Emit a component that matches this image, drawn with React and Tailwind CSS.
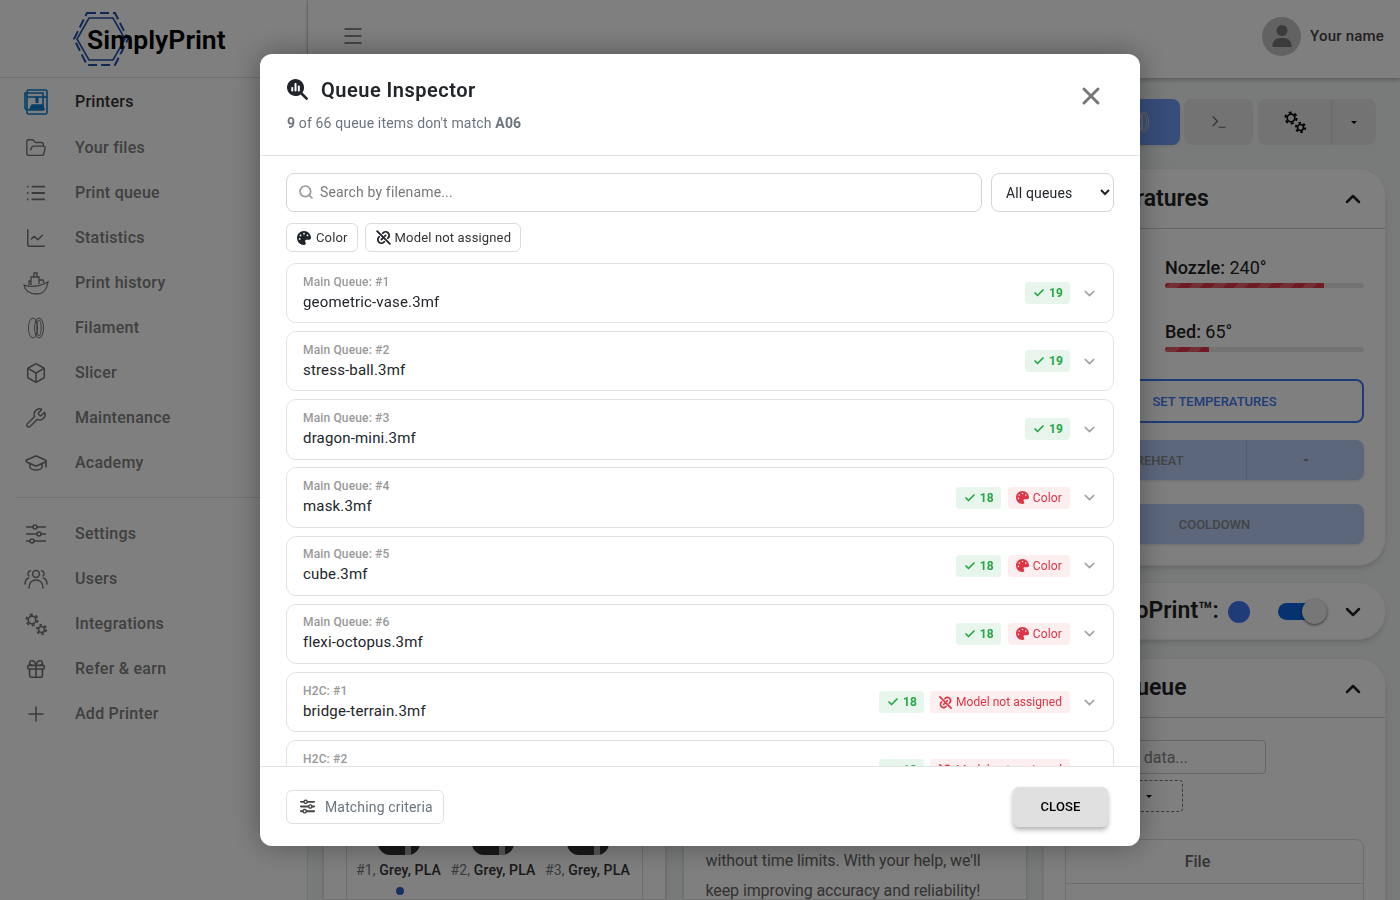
import {
  Box, Check, ChevronDown, ChevronUp, FolderOpen, Gift, GraduationCap, List, Menu, Plus, Search, Terminal, Wrench, X, ChartLine,
} from 'lucide-react'
import { FaMagnifyingGlassChart, FaPalette, FaSliders, FaUser } from 'react-icons/fa6'
import { TbLinkOff } from 'react-icons/tb'

function Gears({ className }) {
  return (
    <svg viewBox="0 0 24 24" fill="none" stroke="currentColor" className={className}>
      <circle cx="8" cy="8" r="3.8" strokeWidth="1.7" />
      <circle cx="8" cy="8" r="5.6" strokeWidth="2" strokeDasharray="2.9 2.95" />
      <circle cx="17.5" cy="17.5" r="3" strokeWidth="1.6" />
      <circle cx="17.5" cy="17.5" r="4.7" strokeWidth="1.9" strokeDasharray="2.4 2.5" />
    </svg>
  )
}

function SlidersIcon() {
  return (
    <svg viewBox="0 0 22 22" fill="none" stroke="currentColor" strokeWidth="1.6" className="w-[22px] h-[22px]">
      <path d="M1 4h7M12 4h9M1 11h11M16 11h5M1 18h4M9 18h12" />
      <circle cx="10" cy="4" r="2" />
      <circle cx="14" cy="11" r="2" />
      <circle cx="7" cy="18" r="2" />
    </svg>
  )
}

function UsersIcon() {
  return (
    <svg viewBox="0 0 24 22" fill="none" stroke="currentColor" strokeWidth="1.5" strokeLinecap="round" className="w-[24px] h-[22px]">
      <circle cx="12" cy="6" r="3.4" />
      <path d="M5 20c0-5 3-8 7-8s7 3 7 8" />
      <path d="M6.5 2.8a3 3 0 0 0-1.6 5.2M1 16c0-3 1.200-5 3.500-6" />
      <path d="M17.500 2.800a3 3 0 0 1 1.600 5.200M23 16c0-3-1.200-5-3.500-6" />
    </svg>
  )
}

function PrinterIcon() {
  return (
    <svg viewBox="0 0 24 26" fill="none" stroke="#0b7fd0" strokeWidth="1.6" className="w-[24px] h-[26px]">
      <rect x="3" y="1" width="20" height="24" rx="1.5" />
      <path d="M1 4h18v17H4a3 3 0 0 1-3-3z" />
      <path d="M3 8h20" />
      <path d="M13 8v6" strokeWidth="3" />
      <path d="M6 20l2-4h10l2 4z" fill="#0b7fd0" />
    </svg>
  )
}

function BoatIcon() {
  return (
    <svg viewBox="0 0 26 24" fill="none" stroke="currentColor" strokeWidth="1.3" className="w-[26px] h-[24px]">
      <path d="M1 14c5 2 14 2 24-3-1 7-5 12-11 12-7 0-12-3-13-9z" />
      <path d="M8 14V6h8v7M11 6V2h3v4M6 14v-4h2M16 9h4l1 3" />
    </svg>
  )
}

function FilamentIcon() {
  return (
    <svg viewBox="0 0 18 22" fill="none" stroke="currentColor" strokeWidth="1" className="w-[18px] h-[22px]">
      <ellipse cx="6" cy="11" rx="4.5" ry="10" />
      <ellipse cx="12" cy="11" rx="4.5" ry="10" />
      <ellipse cx="12" cy="11" rx="2.2" ry="8" />
    </svg>
  )
}

function Logo() {
  return (
    <div className="relative h-[78px] border-b border-[#e2e2e2] flex items-center pl-[87px] pt-[3px]">
      <svg viewBox="0 0 56 56" fill="none" stroke="#1c4fa8" className="absolute left-[73px] top-[11px] w-[56px] h-[56px]">
        <path d="M16 7h24l12 21-12 21H16L4 28z" strokeWidth="1.6" />
        <path d="M14 2h28l13 26-13 26H14L1 28z" strokeWidth="2" strokeDasharray="9 4" />
      </svg>
      <span className="relative text-[26.6px] font-semibold text-black">SimplyPrint</span>
    </div>
  )
}

const navTop = [
  { label: 'Printers', icon: <PrinterIcon />, active: true },
  { label: 'Your files', icon: <FolderOpen className="w-[22px] h-[22px]" strokeWidth={1.5} /> },
  { label: 'Print queue', icon: <List className="w-[22px] h-[22px]" strokeWidth={2} /> },
  { label: 'Statistics', icon: <ChartLine className="w-[22px] h-[22px]" strokeWidth={1.6} /> },
  { label: 'Print history', icon: <BoatIcon /> },
  { label: 'Filament', icon: <FilamentIcon /> },
  { label: 'Slicer', icon: <Box className="w-[22px] h-[22px]" strokeWidth={1.7} /> },
  { label: 'Maintenance', icon: <Wrench className="w-[22px] h-[22px]" strokeWidth={1.6} /> },
  { label: 'Academy', icon: <GraduationCap className="w-[24px] h-[24px]" strokeWidth={1.6} /> },
]

const navBottom = [
  { label: 'Settings', icon: <SlidersIcon /> },
  { label: 'Users', icon: <UsersIcon /> },
  { label: 'Integrations', icon: <Gears className="w-[24px] h-[24px]" /> },
  { label: 'Refer & earn', icon: <Gift className="w-[22px] h-[22px]" strokeWidth={1.8} /> },
  { label: 'Add Printer', icon: <Plus className="w-[24px] h-[24px]" strokeWidth={1.5} /> },
]

function NavItem({ item }) {
  return (
    <div className="flex items-center h-[45px]">
      <div className="w-[72px] flex justify-center text-[#757575]">{item.icon}</div>
      <span className={item.active ? 'pl-[3px] text-base font-medium tracking-[0.25px] text-[#333]' : 'pl-[3px] text-base font-medium tracking-[0.25px] text-[#808080]'}>
        {item.label}
      </span>
    </div>
  )
}

function Sidebar() {
  return (
    <aside className="w-[308px] shrink-0 h-full bg-white border-r border-[#e2e2e2]">
      <Logo />
      <div className="h-px" />
      <NavItem item={navTop[0]} />
      <div className="h-px" />
      {navTop.slice(1).map((item) => (
        <NavItem key={item.label} item={item} />
      ))}
      <div className="ml-[17px] mt-[12px] mb-[13px] border-t border-[#e6e6e6]" />
      {navBottom.map((item) => (
        <NavItem key={item.label} item={item} />
      ))}
    </aside>
  )
}

function SpoolLabel({ n }) {
  return (
    <div className="flex flex-col items-center w-[94.5px]">
      <div className="w-[42px] h-[12px] rounded-b-[14px] bg-[#333] flex justify-end pr-[9px]">
        <div className="w-[6px] h-[12px] bg-[#aaa]" />
      </div>
      <div className="mt-[5px] text-sm tracking-[0.15px] whitespace-nowrap text-[#777]">
        #{n}, <span className="font-medium text-[#333]">Grey, PLA</span>
      </div>
    </div>
  )
}

function Background() {
  return (
    <div className="h-[900px] flex overflow-hidden bg-[#f2f5f5] text-[#222]">
      <Sidebar />
      <div className="flex-1 flex flex-col min-w-0">
        {/* Top bar */}
        <header className="h-[78px] shrink-0 bg-white shadow-[0_2px_4px_rgba(0,0,0,0.25)] flex items-center justify-between pl-[33px] pr-[16px] pb-[6px]">
          <Menu className="w-6 h-6 -mt-px text-[#666]" strokeWidth={1.5} />
          <div className="flex items-center gap-[9px]">
            <div className="w-[39px] h-[39px] rounded-full bg-[#c4c4c4] flex items-center justify-center text-[#777]">
              <FaUser className="w-[22px] h-[22px]" />
            </div>
            <span className="text-[15px] font-medium tracking-[0.2px] text-[#444]">Your name</span>
          </div>
        </header>

        <div className="flex-1 min-h-0 grid grid-cols-[343px_344px_343px] gap-x-[16.5px] pl-[15px]">
          {/* Filament column */}
          <div className="pt-[21px] flex flex-col min-h-0">
            <div className="flex-1 bg-white rounded-t-[28px] border border-[#ddd] shadow-md px-[22px] flex flex-col overflow-hidden">
              <div className="flex-1 -mb-[10px] border border-[#ddd] rounded-lg flex flex-col justify-end items-center pb-[13px]">
                <div className="flex justify-center pr-[3px]">
                  <SpoolLabel n={1} />
                  <SpoolLabel n={2} />
                  <SpoolLabel n={3} />
                </div>
                <div className="mt-[7px] w-[8px] h-[8px] rounded-full bg-[#2f5fc4] self-start ml-[49px]" />
              </div>
            </div>
          </div>

          {/* Feedback column */}
          <div className="pt-[21px] flex flex-col min-h-0">
            <div className="flex-1 bg-white rounded-t-[28px] border border-[#ddd] shadow-md pl-[22px] pr-[20px] flex flex-col justify-end overflow-hidden">
              <p className="text-base leading-[30px] tracking-[-0.1px] text-[#666] -mb-[7px]">
                without time limits. With your help, we'll keep improving accuracy and reliability!
              </p>
            </div>
          </div>

          {/* Printer column */}
          <div className="pt-[21px] flex flex-col min-h-0">
            <div className="h-[46px] shrink-0 flex gap-[4px] pr-[10px]">
              <div className="flex-1 rounded-lg bg-[#6f9bf5] shadow flex items-center justify-end pr-[30px] text-[#ccc]">
                <FilamentIcon />
              </div>
              <div className="w-[69px] rounded-lg bg-[#e6e6e6] flex items-center justify-center text-[#666]">
                <Terminal className="w-[18px] h-[18px]" strokeWidth={1.5} />
              </div>
              <div className="w-[118px] ml-[1px] rounded-lg bg-[#e6e6e6] flex items-center">
                <div className="w-[73px] h-full flex items-center justify-center text-black">
                  <Gears className="w-[24px] h-[24px]" />
                </div>
                <div className="flex-1 h-full border-l border-[#d4d4d4] flex items-center justify-center">
                  <div className="border-x-[3px] border-t-[3px] border-x-transparent border-t-black" />
                </div>
              </div>
            </div>

            <div className="mt-[23px] h-[398px] shrink-0 bg-white rounded-[28px] shadow-md border border-[#eee] flex flex-col">
              <div className="h-[60px] shrink-0 border-b border-[#ccc] flex items-center justify-between pl-[21px] pr-[20px] pt-[1px]">
                <span className="text-[23px] font-semibold">Temperatures</span>
                <ChevronUp className="w-6 h-6 text-[#222]" strokeWidth={2.5} />
              </div>
              <div className="pl-[21px] pr-[21px] flex flex-col">
                <div className="pl-[100px] pt-[27px]">
                  <div className="text-lg leading-[24px]"><span className="font-medium">Nozzle:</span> 240°</div>
                  <div className="mt-[3px] h-[5px] rounded bg-[#e5e5e5] overflow-hidden">
                    <div className="h-full w-[80%] bg-[repeating-linear-gradient(-45deg,#dc3545_0,#dc3545_8px,#e4606d_8px,#e4606d_16px)]" />
                  </div>
                  <div className="mt-[32px] text-lg leading-[24px]"><span className="font-medium">Bed:</span> 65°</div>
                  <div className="mt-[3px] h-[5px] rounded bg-[#e5e5e5] overflow-hidden">
                    <div className="h-full w-[22%] bg-[repeating-linear-gradient(-45deg,#dc3545_0,#dc3545_8px,#e4606d_8px,#e4606d_16px)]" />
                  </div>
                </div>
                <div className="mt-[27px] h-[44px] rounded-lg border-2 border-[#3f78f0] flex items-center justify-center pt-[1px] text-[13px] font-medium text-[#3f78f0]">
                  SET TEMPERATURES
                </div>
                <div className="mt-[17px] h-[40px] rounded-lg bg-[#b9cff9] shadow flex text-[13px] font-medium text-[#888]">
                  <div className="w-[182px] border-r border-[#a6bff2] flex items-center justify-center pt-[1px]">PREHEAT</div>
                  <div className="flex-1 flex items-center justify-center">
                    <div className="border-x-[3px] border-t-[3px] border-x-transparent border-t-[#888]" />
                  </div>
                </div>
                <div className="mt-[24px] h-[40px] rounded-lg bg-[#b9cff9] shadow flex items-center justify-center pt-[1px] text-[13px] font-medium text-[#888]">
                  COOLDOWN
                </div>
              </div>
            </div>

            <div className="mt-[16px] h-[58px] shrink-0 bg-white rounded-[28px] shadow-md border border-[#eee] flex items-center pl-[56px] pr-[20px] pt-[1px]">
              <span className="text-[23px] font-semibold whitespace-nowrap">AutoPrint™:</span>
              <div className="ml-[9px] w-[22px] h-[22px] rounded-full bg-[#3f78f0]" />
              <div className="ml-[28px] w-[49px] h-[25px] flex items-center">
                <div className="w-full h-[17px] rounded-full bg-[#0a66e0] flex justify-end items-center">
                  <div className="w-[25px] h-[25px] rounded-full bg-[#eee] shadow-[0_1px_3px_rgba(0,0,0,0.6)]" />
                </div>
              </div>
              <ChevronDown className="ml-auto w-6 h-6 text-[#222]" strokeWidth={2.5} />
            </div>

            <div className="mt-[18px] flex-1 bg-white rounded-t-[28px] shadow-md border border-[#eee] flex flex-col">
              <div className="h-[59px] shrink-0 border-b border-[#ccc] flex items-center justify-between pl-[21px] pr-[20px] pt-[1px]">
                <span className="text-[23px] font-semibold">Print Queue</span>
                <ChevronUp className="w-6 h-6 text-[#222]" strokeWidth={2.5} />
              </div>
              <div className="px-[21px] pt-[22px]">
                <div className="w-[201px] h-[34px] rounded border border-[#ccc] flex items-center justify-end pr-[77px] pt-[1px] text-base text-[#888] whitespace-nowrap">
                  data...
                </div>
                <div className="mt-[6px] w-[118px] h-[32px] rounded border border-dashed border-[#777] flex items-center justify-end pr-[30px]">
                  <div className="border-x-[3px] border-t-[3px] border-x-transparent border-t-black" />
                </div>
                <div className="mt-[27px] border border-[#ddd] rounded-t-lg">
                  <div className="h-[44px] border-b border-[#ddd] flex items-center justify-center pr-[34px] text-base font-medium text-[#666]">
                    File
                  </div>
                  <div className="h-[44px]" />
                </div>
              </div>
            </div>
          </div>
        </div>
      </div>
    </div>
  )
}

const items = [
  { queue: 'Main Queue: #1', name: 'geometric-vase.3mf', ok: 19 },
  { queue: 'Main Queue: #2', name: 'stress-ball.3mf', ok: 19 },
  { queue: 'Main Queue: #3', name: 'dragon-mini.3mf', ok: 19 },
  { queue: 'Main Queue: #4', name: 'mask.3mf', ok: 18, issue: 'color' },
  { queue: 'Main Queue: #5', name: 'cube.3mf', ok: 18, issue: 'color' },
  { queue: 'Main Queue: #6', name: 'flexi-octopus.3mf', ok: 18, issue: 'color' },
  { queue: 'H2C: #1', name: 'bridge-terrain.3mf', ok: 18, issue: 'model' },
  { queue: 'H2C: #2', name: '', ok: 18, issue: 'model' },
]

function QueueItem({ item }) {
  return (
    <div className="h-[60.5px] shrink-0 rounded-[10px] border border-[#e3e3e3] bg-white flex items-center pl-[16px] pr-[15px]">
      <div className="flex-1 min-w-0">
        <div className="text-xs font-medium leading-[14px] text-[#999]">{item.queue}</div>
        <div className="mt-[3px] h-[20px] text-[15px] leading-[20px] tracking-[0.17px] text-[#212529]">{item.name}</div>
      </div>
      <div className="flex items-center gap-[6px]">
        <span className="h-[22px] pl-[8px] pr-[7px] rounded bg-[#e8f5ec] flex items-center gap-[4px] text-xs font-bold text-[#28a745]">
          <Check className="w-[12px] h-[12px]" strokeWidth={3.5} />
          {item.ok}
        </span>
        {item.issue === 'color' && (
          <span className="ml-px h-[22px] px-[8px] rounded bg-[#fdeeef] flex items-center gap-[4px] text-xs text-[#dc3545]">
            <FaPalette className="w-[13px] h-[13px]" />
            Color
          </span>
        )}
        {item.issue === 'model' && (
          <span className="h-[22px] px-[8px] rounded bg-[#fdeeef] flex items-center gap-[3px] text-xs tracking-[0.05px] text-[#dc3545]">
            <TbLinkOff className="w-[15px] h-[15px]" strokeWidth={2.6} />
            Model not assigned
          </span>
        )}
      </div>
      <ChevronDown className="ml-[11px] w-[17px] h-[17px] text-[#a3a3a3]" strokeWidth={2.2} />
    </div>
  )
}

function QueueInspector() {
  return (
    <div className="fixed inset-0 bg-black/50 flex items-center justify-center">
      <div className="w-[880px] h-[792px] bg-white rounded-xl shadow-[0_0_30px_rgba(0,0,0,0.35)] flex flex-col overflow-hidden tracking-[0.15px]">
        {/* Header */}
        <div className="h-[102px] shrink-0 border-b border-[#e3e3e3] pl-[27px] pr-[35px] pt-[23px] flex items-start justify-between">
          <div>
            <div className="flex items-center gap-[13px] h-[25px]">
              <FaMagnifyingGlassChart className="w-[21px] h-[21px] text-[#212529]" />
              <h2 className="text-xl font-semibold tracking-[0.5px] text-[#212529]">Queue Inspector</h2>
            </div>
            <p className="mt-[11px] text-sm leading-[20px] text-[#6c757d]">
              <b className="font-bold">9</b> of 66 queue items don't match <b className="font-bold">A06</b>
            </p>
          </div>
          <X className="mt-[5px] w-[28px] h-[28px] text-[#777]" strokeWidth={2.5} />
        </div>

        {/* Body */}
        <div className="flex-1 min-h-0 overflow-hidden px-[26px] pt-[17px]">
          <div className="flex gap-[9px] h-[39px]">
            <div className="flex-1 rounded-lg border border-[#d5d5d5] flex items-center gap-[6px] pl-[11px] pb-[1px]">
              <Search className="w-[16px] h-[16px] text-[#999]" strokeWidth={2.5} />
              <input
                type="text"
                placeholder="Search by filename..."
                className="flex-1 text-sm outline-none placeholder:text-[#777]"
              />
            </div>
            <select className="w-[123px] rounded-lg border border-[#d5d5d5] bg-white pl-[10px] text-sm text-[#212529] outline-none">
              <option>All queues</option>
            </select>
          </div>

          <div className="mt-[11px] flex gap-[7px]">
            <span className="h-[29px] pl-[10px] pr-[9px] rounded-md border border-[#dcdcdc] flex items-center gap-[5px] text-[13px] text-[#333]">
              <FaPalette className="w-[14px] h-[14px] text-[#212529]" />
              Color
            </span>
            <span className="h-[29px] px-[9px] rounded-md border border-[#dcdcdc] flex items-center gap-[3px] text-[13px] text-[#333]">
              <TbLinkOff className="w-[17px] h-[17px] text-[#212529]" strokeWidth={2.6} />
              Model not assigned
            </span>
          </div>

          <div className="mt-[10.75px] flex flex-col gap-[7.7px]">
            {items.map((item) => (
              <QueueItem key={item.queue} item={item} />
            ))}
          </div>
        </div>

        {/* Footer */}
        <div className="h-[80px] shrink-0 border-t border-[#e3e3e3] pl-[26px] pr-[32px] flex items-center justify-between">
          <button className="h-[34px] pl-[13px] pr-[10px] rounded-md border border-[#e0e0e0] flex items-center gap-[10px] text-sm text-[#6c757d]">
            <FaSliders className="w-[15px] h-[15px] text-[#444]" />
            Matching criteria
          </button>
          <button className="w-[95px] h-[40px] rounded-md bg-[#e0e0e0] shadow-[0_3px_5px_rgba(0,0,0,0.3)] text-[13px] font-medium text-black">
            CLOSE
          </button>
        </div>
      </div>
    </div>
  )
}

export default function App() {
  return (
    <div className="font-['Roboto',sans-serif]">
      <Background />
      <QueueInspector />
    </div>
  )
}
